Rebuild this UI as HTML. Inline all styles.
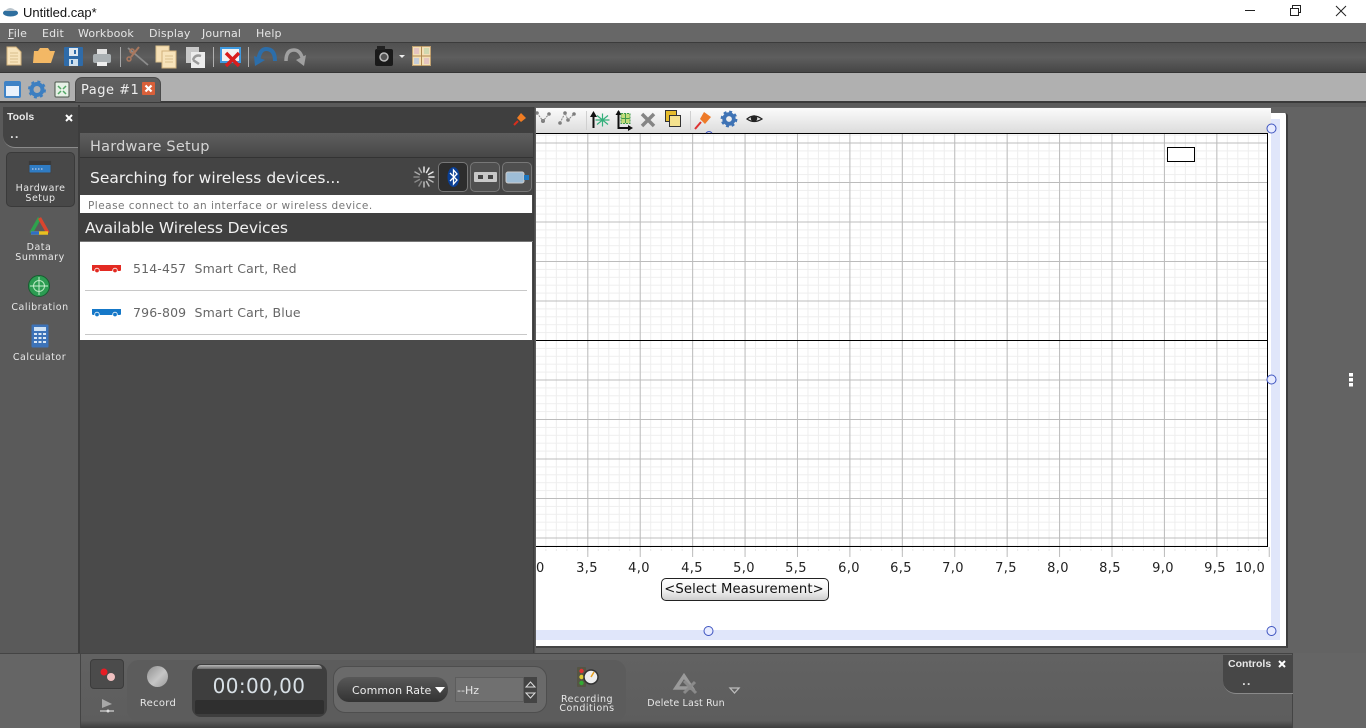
<!DOCTYPE html>
<html><head><meta charset="utf-8"><title>Untitled.cap*</title>
<style>
html,body{margin:0;padding:0;width:1366px;height:728px;overflow:hidden;background:#636363}
body{position:relative;font-family:"DejaVu Sans","Liberation Sans",sans-serif}
.a{position:absolute}
.t{position:absolute;white-space:nowrap;line-height:1}
.c{transform:translateX(-50%);text-align:center}
svg{position:absolute;overflow:visible}
.m{top:28px;font-size:11px;color:#e6e6e6;letter-spacing:.15px}
.s{font-size:9.5px;color:#e8e8e8;letter-spacing:.5px}
.x{font-size:13px;color:#222;top:562px;letter-spacing:.35px}
</style></head><body>
<!-- title bar -->
<div class="a" style="left:0;top:0;width:1366px;height:23px;background:#fff"></div>
<svg style="left:2px;top:5px" width="17" height="12"><ellipse cx="8.500" cy="8" rx="7.500" ry="3.500" fill="#2f6f9f"/><path d="M3 6Q8 0 14 6Z" fill="#b9c4cc"/></svg>
<div class="t" style="left:23px;top:5px;font:13px 'Liberation Sans',sans-serif;color:#111">Untitled.cap*</div>
<svg style="left:1240px;top:0" width="120" height="23" fill="none" stroke="#222"><path d="M5 10.500H15"/><rect x="50.500" y="8.500" width="8" height="7"/><path d="M52.500 8.500V5.500H60.500V12.500H58.500"/><path d="M96 6L106 16M106 6L96 16"/></svg>
<!-- menu -->
<div class="a" style="left:0;top:23px;width:1366px;height:19px;background:#676767"></div>
<div class="t m" style="left:8px"><u>F</u>ile</div><div class="t m" style="left:42px">Edit</div><div class="t m" style="left:78px">Workbook</div><div class="t m" style="left:149px">Display</div><div class="t m" style="left:202px">Journal</div><div class="t m" style="left:256px">Help</div>
<!-- toolbar -->
<div class="a" style="left:0;top:42px;width:1366px;height:31px;background:linear-gradient(#505050,#5e5e5e 50%,#464646);border-top:1px solid #3c3c3c;border-bottom:1px solid #353535;box-sizing:border-box"></div>
<div class="a" style="left:0;top:73px;width:1366px;height:28px;background:#b0b0b0"></div>
<div class="a" style="left:0;top:101px;width:1366px;height:2px;background:#3a3a3a"></div>
<div class="a" style="left:0;top:103px;width:1366px;height:4px;background:#5a5a5a"></div>
<svg style="left:0;top:42px" width="440" height="30">
<path d="M7 5H16L21 10V23H7Z" fill="#f7e3bb" stroke="#d2b27c"/><path d="M10 11H18M10 14H18M10 17H18M10 20H18" stroke="#d9bf8e"/>
<path d="M34 9H38L40 6H48L50 9H55L51 21H33Z" fill="#f3b865"/>
<rect x="64" y="5" width="19" height="19" rx="1" fill="#2f6ba8"/><rect x="69" y="6" width="9" height="8" fill="#dfe8f0"/><rect x="69" y="17" width="9" height="7" fill="#cfe0ee"/><rect x="71" y="18" width="2" height="4" fill="#2f6ba8"/><rect x="74" y="8" width="2" height="4" fill="#2f6ba8"/>
<rect x="93" y="12" width="18" height="9" rx="2" fill="#aab0b3"/><rect x="97" y="7" width="10" height="5" fill="#e2e2e2"/><rect x="97" y="20" width="10" height="4" fill="#eee"/>
<path d="M120.500 5V25" stroke="#a8a8a8"/>
<path d="M128 6L148 23" stroke="#8c8c8c" stroke-width="1.800" fill="none"/><path d="M139 5L131 15" stroke="#a9785f" stroke-width="2"/><circle cx="129" cy="17" r="2" fill="none" stroke="#a9785f" stroke-width="1.500"/><circle cx="132" cy="9" r="2" fill="none" stroke="#a9785f" stroke-width="1.500"/>
<rect x="156" y="4" width="13" height="16" fill="#f6e0b6" stroke="#dcc28e"/><rect x="162" y="9" width="14" height="17" fill="#f7e3bb" stroke="#d2b27c"/><path d="M165 14H173M165 17H173M165 20H173" stroke="#d9bf8e"/>
<rect x="186" y="5" width="13" height="16" fill="#c8c8c8"/><rect x="191" y="10" width="14" height="16" fill="#ececec"/><path d="M193 18Q195 12 201 14M193 18L199 22" stroke="#9a9a9a" stroke-width="2.500" fill="none"/>
<path d="M213.500 5V25M248.500 5V25" stroke="#b0b0b0"/>
<rect x="221" y="6" width="19" height="14" fill="#f2f2f2" stroke="#3f9ae0" stroke-width="2"/><path d="M226 11L239 24M239 11L226 24" stroke="#d81e1e" stroke-width="3.500"/>
<path d="M258 21Q259 7 266 7Q275 7 275 19" fill="none" stroke="#2c6eaa" stroke-width="4"/><path d="M254 14L265 18L255 24Z" fill="#2c6eaa"/>
<path d="M286 19Q286 8 294 8Q301 8 303 19" fill="none" stroke="#a0a0a0" stroke-width="3.500"/><path d="M296 18L306 13L304 24Z" fill="#a0a0a0"/>
<rect x="375" y="7" width="18" height="17" rx="2" fill="#1a1a1a"/><rect x="377" y="4" width="8" height="4" fill="#222"/><circle cx="384" cy="15" r="4" fill="#555" stroke="#bbb" stroke-width="1.500"/>
<path d="M399 13H405L402 16Z" fill="#eee"/>
<rect x="412.500" y="4.500" width="18" height="19" fill="#f3dfb6" stroke="#c0a070"/><path d="M421.500 4V24M412 14H431" stroke="#b08a50"/><rect x="414" y="6" width="5" height="6" fill="#e4c4c0"/><rect x="424" y="6" width="5" height="6" fill="#cfd8b0"/><rect x="414" y="16" width="5" height="6" fill="#c4ccd8"/><rect x="424" y="16" width="5" height="6" fill="#e4c4c0"/>
</svg>
<!-- tab row -->
<svg style="left:3px;top:80px" width="72" height="20">
<rect x="2" y="2" width="15" height="15" rx="1" fill="#eaf2fb" stroke="#3f83c6" stroke-width="2"/><rect x="2" y="2" width="15" height="4" fill="#3f83c6"/>
<circle cx="34" cy="9.500" r="5.500" fill="none" stroke="#3d7fc1" stroke-width="4"/><circle cx="34" cy="9.500" r="8" fill="none" stroke="#3d7fc1" stroke-width="2" stroke-dasharray="3 3.300"/>
<rect x="52" y="2" width="14" height="15" rx="1" fill="#e6f1e6" stroke="#4a554a"/><path d="M55 6L58 9M63 6L60 9M55 14L58 11M63 14L60 11" stroke="#52a866" stroke-width="1.500"/>
</svg>
<div class="a" style="left:75px;top:77px;width:86px;height:25px;background:linear-gradient(#606060,#5a5a5a);border-radius:7px 7px 0 0;border:1px solid #4a4a4a;border-bottom:none;box-sizing:border-box"></div>
<div class="t" style="left:81px;top:84px;font-size:13px;color:#eee;letter-spacing:.5px">Page #1</div>
<div class="a" style="left:142px;top:82px;width:13px;height:13px;background:#d9603a;border-radius:1px"></div>
<svg style="left:142px;top:82px" width="13" height="13"><path d="M3.500 3.500L9.500 9.500M9.500 3.500L3.500 9.500" stroke="#fff" stroke-width="2.200"/></svg>
<!-- main page -->
<div class="a" style="left:533px;top:107px;width:833px;height:547px;background:#636363"></div>
<div class="a" style="left:536px;top:113px;width:752px;height:535px;background:#fff;border-right:2px solid #3c3c3c;border-bottom:2px solid #444;box-sizing:border-box;border-radius:0 3px 0 0"></div>
<div class="a" style="left:1271px;top:119px;width:9px;height:521px;background:#e0e6fa"></div>
<div class="a" style="left:536px;top:630px;width:744px;height:10px;background:#e0e6fa"></div>
<svg style="left:536px;top:133px" width="733" height="424">
<defs>
<pattern id="gmin" x="51.300" y="9.500" width="10.484" height="7.900" patternUnits="userSpaceOnUse"><path d="M.5 0V7.900M0 .5H10.484" stroke="#eeeeee" fill="none"/></pattern>
<pattern id="gmaj" x="51.300" y="9.500" width="52.420" height="39.500" patternUnits="userSpaceOnUse"><path d="M.5 0V39.500M0 .5H52.420" stroke="#bcbcbc" fill="none"/></pattern>
<pattern id="tk" x="51.300" y="0" width="52.420" height="10" patternUnits="userSpaceOnUse"><path d="M.5 0V10" stroke="#bbb" fill="none"/></pattern>
<pattern id="tkm" x="51.300" y="0" width="10.484" height="4" patternUnits="userSpaceOnUse"><path d="M.5 0V3" stroke="#e8e8e8" fill="none"/></pattern>
</defs>
<rect width="732" height="413" fill="url(#gmin)"/>
<rect width="732" height="413" fill="url(#gmaj)"/>
<rect y="414" width="733" height="4" fill="url(#tkm)"/>
<rect y="414" width="734" height="10" fill="url(#tk)"/>
<path d="M0 .5H731.500V413.500H0M0 207.500H732" fill="none" stroke="#000" stroke-width="1"/>
<rect x="631.500" y="14.500" width="27" height="14" fill="#fff" stroke="#000" stroke-width="1"/>
</svg>
<!-- graph toolbar -->
<div class="a" style="left:536px;top:108px;width:735px;height:25px;background:linear-gradient(#fbfbfb,#dcdcdc)"></div>
<svg style="left:536px;top:108px" width="236" height="25" fill="none">
<g fill="#7c7c7c"><circle cx="1" cy="5" r="1.800"/><circle cx="7" cy="13" r="2"/><circle cx="13" cy="6" r="1.800"/><circle cx="24" cy="15" r="1.800"/><circle cx="29" cy="5" r="1.800"/><circle cx="32" cy="12" r="1.800"/><circle cx="38" cy="6" r="1.800"/></g>
<path d="M1 5L7 13L13 6M24 15L29 5L32 12L38 6" stroke="#888" stroke-dasharray="2 1"/>
<path d="M50.500 3V22" stroke="#d0d0d0"/>
<path d="M57.500 20V5" stroke="#111" stroke-width="2"/><path d="M54 9L57.500 3L61 9Z" fill="#111"/>
<path d="M62 8L73 17M62 17L73 8M67.500 6V19M60.500 12.500H74.500" stroke="#35b07c" stroke-width="1.200" transform="translate(-1 -.5)"/>
<path d="M82.500 3V20H95" stroke="#111" stroke-width="2"/><path d="M79.500 7L82.500 2L85.500 7ZM92 17L97 20L92 23Z" fill="#111"/>
<path d="M85 5.500H94V15.500H85Z" fill="#c4dc7c" stroke="#3f9a4c" stroke-dasharray="2 1"/><path d="M89.500 6V15M85.500 10.500H93.500" stroke="#3f9a4c"/>
<path d="M106 6L118 18M118 6L106 18" stroke="#858585" stroke-width="3.500"/>
<rect x="129.500" y="2.500" width="11" height="11" fill="#e6bc2c" stroke="#333" stroke-width="1"/><rect x="133.500" y="7.500" width="11" height="11" fill="#f5e28e" stroke="#333" stroke-width="1"/>
<path d="M154.500 3V22" stroke="#d0d0d0"/>
<path d="M168 4L175 9L169 16L164 11Z" fill="#ee7a28"/><path d="M165 14L159 21" stroke="#d33" stroke-width="2"/>
<circle cx="193" cy="11" r="4.800" stroke="#3f73b5" stroke-width="3.800"/><circle cx="193" cy="11" r="7.400" stroke="#3f73b5" stroke-width="2" stroke-dasharray="3 2.800"/>
<path d="M211 11Q218 5 226 11Q218 16 211 11Z" fill="#ddd" stroke="#222" stroke-width="1.200"/><circle cx="218" cy="10.500" r="3.200" fill="#222"/>
</svg>
<!-- axis labels -->
<div class="t x" style="left:536px">0</div>
<div class="t x c" style="left:587px">3,5</div><div class="t x c" style="left:639px">4,0</div><div class="t x c" style="left:692px">4,5</div><div class="t x c" style="left:744px">5,0</div><div class="t x c" style="left:796px">5,5</div><div class="t x c" style="left:849px">6,0</div><div class="t x c" style="left:901px">6,5</div><div class="t x c" style="left:953px">7,0</div><div class="t x c" style="left:1006px">7,5</div><div class="t x c" style="left:1058px">8,0</div><div class="t x c" style="left:1110px">8,5</div><div class="t x c" style="left:1163px">9,0</div><div class="t x c" style="left:1215px">9,5</div><div class="t x c" style="left:1250px">10,0</div>
<div class="a" style="left:661px;top:578px;width:168px;height:23px;box-sizing:border-box;border:1px solid #222;border-radius:5px;background:linear-gradient(#fff,#f4f4f4 50%,#cfcfcf)"></div>
<div class="t c" style="left:744px;top:583px;font-size:13.200px;color:#111;letter-spacing:.1px">&lt;Select Measurement&gt;</div>
<!-- handles -->
<svg style="left:700px;top:120px" width="580" height="520" fill="#e8ecff" stroke="#3f55c0"><path d="M6 13Q9 10 12 13" fill="none"/><circle cx="571.500" cy="8.500" r="4.500"/><circle cx="571.500" cy="259.500" r="4.500"/><circle cx="8.500" cy="511" r="4.500"/><circle cx="571.500" cy="511" r="4.500"/></svg>
<svg style="left:1349px;top:373px" width="5" height="14" fill="#fff"><rect width="4" height="3.500"/><rect y="5" width="4" height="3.500"/><rect y="10" width="4" height="3.500"/></svg>
<!-- left tools -->
<div class="a" style="left:0;top:105px;width:80px;height:549px;background:#5a5a5a;border-right:2px solid #3d3d3d;box-sizing:border-box"></div>
<div class="a" style="left:3px;top:107px;width:75px;height:41px;background:#444;border-radius:0 0 0 12px;border-bottom:1px solid #8a8a8a;box-sizing:border-box"></div>
<div class="t" style="left:7px;top:112px;font-size:10.500px;font-weight:bold;color:#e8e8e8;font-family:'Liberation Sans',sans-serif">Tools</div>
<svg style="left:65px;top:114px" width="8" height="8"><path d="M1 1L7 7M7 1L1 7" stroke="#fff" stroke-width="2"/></svg>
<div class="t" style="left:10px;top:131px;font-size:10px;font-weight:bold;color:#ddd;letter-spacing:1px">..</div>
<div class="a" style="left:6px;top:152px;width:69px;height:55px;background:#484848;border-radius:5px;border:1px solid #3a3a3a;box-sizing:border-box"></div>
<svg style="left:29px;top:160px" width="24" height="15"><rect width="22" height="12" y="1" rx="1" fill="#2f7cc4" stroke="#444"/><rect width="22" height="4" y="1" fill="#3a3a3a"/><path d="M3 9H15" stroke="#dde" stroke-dasharray="1.500 1.500"/></svg>
<div class="t s c" style="left:40.500px;top:184px">Hardware</div><div class="t s c" style="left:40.500px;top:194px">Setup</div>
<svg style="left:28px;top:215px" width="23" height="21" fill="none" stroke-width="3.500"><path d="M11.500 3L3 18" stroke="#2fa24d"/><path d="M11.500 3L20 18" stroke="#d9452e"/><path d="M3 18H20" stroke="#e8c020"/><path d="M3 18H11" stroke="#2f6fc4"/></svg>
<div class="t s c" style="left:39px;top:243px">Data</div><div class="t s c" style="left:40px;top:253px">Summary</div>
<svg style="left:27px;top:274px" width="24" height="24"><circle cx="12" cy="12" r="10.500" fill="#2c9c52" stroke="#175e30"/><circle cx="12" cy="12" r="5.500" fill="none" stroke="#b8e8c0"/><path d="M3 12H21M12 3V21" stroke="#c8f0d0"/></svg>
<div class="t s c" style="left:40px;top:303px">Calibration</div>
<svg style="left:31px;top:324px" width="18" height="24"><rect width="17" height="23" x=".5" y=".5" rx="1" fill="#3d73b8"/><rect x="3" y="3" width="12" height="4" fill="#cfe2f4"/><path d="M3 10H15M3 14H15M3 18H15" stroke="#dce8f4" stroke-width="2" stroke-dasharray="3 1.500"/></svg>
<div class="t s c" style="left:39.500px;top:353px">Calculator</div>
<!-- hardware panel -->
<div class="a" style="left:80px;top:107px;width:453px;height:547px;background:#4a4a4a"></div>
<div class="a" style="left:533px;top:107px;width:3px;height:547px;background:linear-gradient(90deg,#333,#666)"></div>
<div class="a" style="left:80px;top:107px;width:453px;height:26px;background:#3f3f3f"></div>
<svg style="left:513px;top:112px" width="14" height="14"><path d="M8 1L13 6L8 10L4 6Z" fill="#f07c22"/><path d="M5 9L1 13" stroke="#d92e1c" stroke-width="2"/></svg>
<div class="a" style="left:80px;top:133px;width:453px;height:25px;background:linear-gradient(#5e5e5e,#474747);border-bottom:1px solid #333;box-sizing:border-box"></div>
<div class="t" style="left:90px;top:140px;font-size:14.500px;color:#d4d4d4;letter-spacing:.2px">Hardware Setup</div>
<div class="a" style="left:80px;top:158px;width:453px;height:37px;background:#444"></div>
<div class="t" style="left:90px;top:171px;font-size:15.500px;color:#f2f2f2;letter-spacing:.02px">Searching for wireless devices...</div>
<svg style="left:411px;top:164px" width="26" height="26" stroke-width="1.500" stroke-linecap="round">
<path d="M13 3V8M18 4L15.500 8.500M22 8L17.500 10.500M23 13H18" stroke="#e8e8e8"/>
<path d="M22 18L17.500 15.500M18 22L15.500 17.500M13 23V18" stroke="#bbb"/>
<path d="M8 22L10.500 17.500M4 18L8.500 15.500M3 13H8" stroke="#888"/>
<path d="M4 8L8.500 10.500M8 4L10.500 8.500" stroke="#aaa"/></svg>
<div class="a" style="left:438px;top:162px;width:30px;height:30px;box-sizing:border-box;border:1px solid #777;border-radius:5px;background:#2d2d2d"></div>
<svg style="left:447px;top:167px" width="13" height="20"><ellipse cx="6.500" cy="10" rx="6" ry="10" fill="#0a3f95"/><path d="M3 6L10 13L6.500 17V3L10 7L3 14" stroke="#fff" stroke-width="1.300" fill="none"/></svg>
<div class="a" style="left:470px;top:162px;width:30px;height:30px;box-sizing:border-box;border:1px solid #777;border-radius:5px;background:#4f4f4f"></div>
<svg style="left:474px;top:172px" width="23" height="10"><rect width="23" height="10" rx="1" fill="#c8c8c8"/><rect x="4" y="3" width="5" height="4" fill="#444"/><rect x="14" y="3" width="5" height="4" fill="#444"/></svg>
<div class="a" style="left:502px;top:162px;width:30px;height:30px;box-sizing:border-box;border:1px solid #777;border-radius:5px;background:#4f4f4f"></div>
<svg style="left:506px;top:171px" width="24" height="13"><rect y="1" width="18" height="11" rx="2" fill="#9ebdd6" stroke="#ccc"/><rect x="18" y="4" width="5" height="5" fill="#1f78c0"/></svg>
<div class="a" style="left:80px;top:195px;width:452px;height:18px;background:#fff"></div>
<div class="t" style="left:88px;top:201px;font-size:10.500px;color:#777;letter-spacing:.48px">Please connect to an interface or wireless device.</div>
<div class="a" style="left:80px;top:213px;width:453px;height:29px;background:#3f3f3f;border-bottom:1px solid #777;box-sizing:border-box"></div>
<div class="t" style="left:85px;top:221px;font-size:15.500px;color:#f0f0f0;letter-spacing:-.12px">Available Wireless Devices</div>
<div class="a" style="left:80px;top:242px;width:452px;height:98px;background:#fff"></div>
<div class="a" style="left:85px;top:290px;width:442px;height:1px;background:#c8c8c8"></div>
<div class="a" style="left:85px;top:334px;width:442px;height:1px;background:#c8c8c8"></div>
<svg style="left:91px;top:264px" width="31" height="10"><path d="M1 1H30V6Q30 7 28 7H3Q1 7 1 6Z" fill="#e32a22"/><circle cx="6" cy="6.500" r="2.300" fill="#e32a22" stroke="#fff" stroke-width=".8"/><circle cx="24" cy="6.500" r="2.300" fill="#e32a22" stroke="#fff" stroke-width=".8"/></svg>
<svg style="left:91px;top:308px" width="31" height="10"><path d="M1 1H30V6Q30 7 28 7H3Q1 7 1 6Z" fill="#1578c8"/><circle cx="6" cy="6.500" r="2.300" fill="#1578c8" stroke="#fff" stroke-width=".8"/><circle cx="24" cy="6.500" r="2.300" fill="#1578c8" stroke="#fff" stroke-width=".8"/></svg>
<div class="t" style="left:133px;top:263px;font-size:12.500px;color:#666;letter-spacing:.15px">514-457&nbsp; Smart Cart, Red</div>
<div class="t" style="left:133px;top:307px;font-size:12.500px;color:#666;letter-spacing:.15px">796-809&nbsp; Smart Cart, Blue</div>
<!-- bottom bar -->
<div class="a" style="left:0;top:653px;width:1366px;height:75px;background:#656565"></div>
<div class="a" style="left:0;top:653px;width:1293px;height:1px;background:#444"></div>
<div class="a" style="left:80px;top:654px;width:1213px;height:74px;background:linear-gradient(#626262,#5d5d5d 90%,#3e3e3e);border-left:1px solid #444;border-right:1px solid #444;box-sizing:border-box"></div>
<div class="a" style="left:90px;top:659px;width:34px;height:30px;background:#4b4b4b;border:1px solid #3c3c3c;border-radius:4px;box-sizing:border-box"></div>
<svg style="left:100px;top:668px" width="18" height="16"><circle cx="4" cy="4" r="3.500" fill="#e81c24"/><circle cx="11" cy="9" r="4" fill="#f0c0c0"/></svg>
<svg style="left:100px;top:698px" width="16" height="16"><path d="M2 1L12 6L2 10Z" fill="#a8a8a8"/><path d="M0 13H14" stroke="#eee"/><circle cx="8" cy="13" r="1.500" fill="#ddd"/></svg>
<div class="a" style="left:127px;top:660px;width:499px;height:61px;background:#5c5c5c;border-radius:12px"></div>
<div class="a" style="left:147px;top:666px;width:21px;height:21px;border-radius:50%;background:linear-gradient(135deg,#8f8f8f,#c6c6c6 55%,#9a9a9a)"></div>
<div class="t s c" style="left:158px;top:699px;font-size:10px;letter-spacing:.3px">Record</div>
<div class="a" style="left:192px;top:664px;width:135px;height:53px;background:#3e3e3e;border-radius:9px"></div>
<div class="a" style="left:197px;top:665px;width:125px;height:4px;background:linear-gradient(#b8b8b8,#6a6a6a);border-radius:4px 4px 0 0"></div>
<div class="a" style="left:195px;top:700px;width:129px;height:14px;background:#2f2f2f;border-radius:2px"></div>
<div class="t c" style="left:259px;top:676px;font-size:20px;color:#d8e0e6;letter-spacing:.4px">00:00,00</div>
<div class="a" style="left:333px;top:666px;width:214px;height:47px;background:#6a6a6a;border-radius:12px;border:1px solid #4e4e4e;box-sizing:border-box"></div>
<div class="a" style="left:337px;top:677px;width:111px;height:25px;background:linear-gradient(#585858,#333);border-radius:12px"></div>
<div class="t" style="left:352px;top:685px;font-size:11px;color:#ececec;letter-spacing:.1px">Common Rate</div>
<svg style="left:435px;top:687px" width="11" height="6"><path d="M0 0H10L5 6Z" fill="#fff"/></svg>
<div class="a" style="left:455px;top:677px;width:69px;height:25px;background:#707070;border:1px solid #5d5d5d;box-sizing:border-box"></div>
<div class="t" style="left:457px;top:685px;font-size:11px;color:#e4e4e4">--Hz</div>
<div class="a" style="left:524px;top:677px;width:13px;height:26px;background:#444"></div>
<svg style="left:525px;top:681px" width="11" height="20" fill="none" stroke="#ddd"><path d="M1 6L5.500 1L10 6ZM1 12L5.500 17L10 12Z"/></svg>
<svg style="left:576px;top:666px" width="24" height="22"><rect x="1" y="1" width="9" height="20" rx="1" fill="#554"/><circle cx="5.500" cy="5" r="2.200" fill="#d33"/><circle cx="5.500" cy="11" r="2.200" fill="#dc3"/><circle cx="5.500" cy="17" r="2.200" fill="#3a3"/><circle cx="15" cy="11" r="7" fill="#eee" stroke="#333" stroke-width="1.500"/><path d="M15 11L18 6" stroke="#e8a020" stroke-width="1.500"/></svg>
<div class="t s c" style="left:587px;top:695px">Recording</div><div class="t s c" style="left:587px;top:704px">Conditions</div>
<svg style="left:674px;top:673px" width="24" height="22" fill="none"><path d="M2 15L10 3L18 15Z" stroke="#9a9a9a" stroke-width="3.500"/><path d="M10 8L22 20M21 9L10 20" stroke="#8a8a8a" stroke-width="3"/></svg>
<div class="t s c" style="left:686px;top:699px;letter-spacing:.15px">Delete Last Run</div>
<svg style="left:729px;top:687px" width="11" height="7"><path d="M1 1H10L5.500 6Z" fill="none" stroke="#bbb" stroke-width="1.300"/></svg>
<div class="a" style="left:1223px;top:655px;width:70px;height:39px;background:#474747;border-radius:0 0 0 13px;border-bottom:1px solid #8a8a8a;box-sizing:border-box"></div>
<div class="t" style="left:1228px;top:659px;font-size:10.500px;font-weight:bold;color:#e8e8e8;font-family:'Liberation Sans',sans-serif">Controls</div>
<svg style="left:1278px;top:660px" width="8" height="8"><path d="M1 1L7 7M7 1L1 7" stroke="#fff" stroke-width="2"/></svg>
<div class="t" style="left:1242px;top:678px;font-size:10px;font-weight:bold;color:#ddd;letter-spacing:1px">..</div>
</body></html>
